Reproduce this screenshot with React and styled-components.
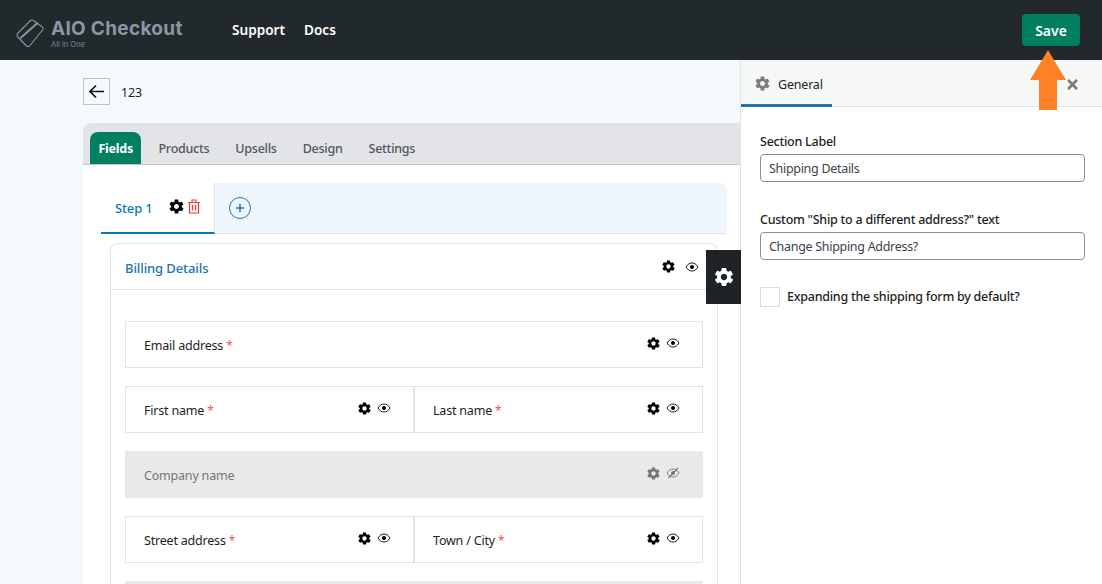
import React from "react";
import styled, { createGlobalStyle } from "styled-components";
import { IoMdSettings } from "react-icons/io";
import { FaTimes } from "react-icons/fa";

const Global = createGlobalStyle`
  html, body { margin: 0; padding: 0; height: 584px; overflow: hidden; }
  * { box-sizing: border-box; }
  body { font-family: "Noto Sans", "Open Sans", sans-serif; font-size: 12.5px; letter-spacing: -0.2px; color: #1e1e1e; }
`;
const Page = styled.div`
  position: relative; width: 1102px; height: 584px; overflow: hidden;
  display: flex; flex-direction: column; background: #f4f9fe;
`;
const Header = styled.header`
  height: 60px; flex: none; background: #22292d; display: flex; align-items: center;
  padding: 0 22px 0 16px;
`;
const Logo = styled.div`display: flex; align-items: center; gap: 6px; width: 216px;`;
const LogoMark = styled.svg`flex: none; margin-top: 7px;`;
const LogoText = styled.div`display: flex; flex-direction: column; color: #8b96a3; margin-top: 8px;`;
const LogoName = styled.span`
  font-family: "Inter", sans-serif; font-size: 19px; line-height: 22px; font-weight: 700; letter-spacing: 0.3px;
`;
const LogoSub = styled.span`font-family: "Inter", sans-serif; font-size: 7.5px; line-height: 10px; letter-spacing: 0; color: #7a8590;`;
const Nav = styled.nav`display: flex; gap: 19px; flex: 1;`;
const NavLink = styled.a`color: #fff; font-size: 13.6px; letter-spacing: 0; font-weight: 600; line-height: 20px;`;
const SaveButton = styled.button`
  width: 58px; height: 32px; border: 0; border-radius: 4px; background: #008060; color: #fff;
  font: 600 14px "Noto Sans", sans-serif; padding: 1px 0 0;
`;
const Body = styled.div`flex: 1; display: flex; min-height: 0;`;
const Main = styled.main`flex: none; width: 740px; padding: 18px 0 0 83px; overflow: hidden; display: flex; flex-direction: column;`;
const TitleRow = styled.div`display: flex; align-items: center; gap: 11px; height: 27px; margin-bottom: 18px;`;
const BackButton = styled.button`
  width: 27px; height: 27px; padding: 0; border: 1px solid #bcc2c8; background: transparent;
  display: flex; align-items: center; justify-content: center; color: #111;
`;
const Title = styled.span`color: #1e1e1e; padding-top: 2px;`;
const Card = styled.section`flex: 1; background: #fff; border-radius: 8px 0 0 0; display: flex; flex-direction: column; min-height: 0;`;
const TabBar = styled.div`
  height: 42px; flex: none; background: #e2e4e7; border-bottom: 1px solid #c4c6ca; border-radius: 8px 0 0 0;
  display: flex; align-items: flex-end; padding-left: 7px; letter-spacing: -0.25px;
`;
const Tab = styled.div`
  height: 32px; display: flex; align-items: center; padding: 2px ${p => p.$active ? "8.5px" : "13px"} 0;
  margin-right: ${p => p.$active ? "4px" : "0"};
  border-radius: 8px 8px 0 0; line-height: 18px;
  font-weight: ${p => p.$active ? 700 : 500};
  background: ${p => p.$active ? "#008060" : "transparent"};
  color: ${p => p.$active ? "#fff" : "#50575e"};
`;
const CardBody = styled.div`padding: 18px 13px 0 18px; flex: 1; min-height: 0;`;
const Steps = styled.div`
  height: 51px; display: flex; background: #eef5fd; border-bottom: 1px solid #e2e4e7; border-radius: 0 8px 0 0;
`;
const StepTab = styled.div`
  width: 114px; margin-bottom: -1px; background: #fff; border-right: 1px solid #e2e4e7; border-bottom: 2px solid #007cba;
  display: flex; align-items: center; padding-left: 14px; color: #007cba; font-size: 13px; letter-spacing: -0.15px; font-weight: 500;
`;
const StepIcons = styled.span`display: flex; align-items: center; gap: 2px; margin-left: 15px; margin-top: -3px;`;
const AddStep = styled.button`
  width: 22px; height: 22px; margin: 14px 0 0 14px; padding: 0; border: 1px solid #2271b1; border-radius: 50%;
  background: transparent; color: #2271b1; display: flex; align-items: center; justify-content: center;
`;
const Section = styled.div`
  margin: 9px 9px 0; border: 1px solid #e2e4e7; border-radius: 8px 8px 0 0; border-bottom: 0; height: 500px;
`;
const SectionHead = styled.div`
  height: 46px; border-bottom: 1px solid #e2e4e7; display: flex; align-items: center; justify-content: space-between;
  padding: 3px 18px 0 14px;
`;
const SectionTitle = styled.span`color: #2271b1; font-size: 13px; letter-spacing: -0.1px; font-weight: 500;`;
const HeadActions = styled.span`display: flex; align-items: center; gap: 9px; color: #000; margin-top: -3px;`;
const Fields = styled.div`padding: 31px 14px 0; display: flex; flex-direction: column; gap: 18px;`;
const Row = styled.div`display: flex;`;
const Field = styled.div`
  flex: 1 1 0; height: 47px; display: flex; align-items: center; justify-content: space-between;
  padding: 0 22px 0 18px;
  border: 1px solid ${p => p.$off ? "#e9e9e9" : "#e2e4e7"};
  background: ${p => p.$off ? "#e9e9e9" : "#fff"};
  color: ${p => p.$off ? "#757575" : "#1e1e1e"};
  & + & { border-left-width: 2px; margin-left: -1px; }
`;
const FieldName = styled.span`white-space: pre; margin-top: 2px;`;
const Req = styled.span`color: #ef5350; font-size: 12px;`;
const Actions = styled.span`
  display: flex; align-items: center; gap: 5px; color: ${p => p.$off ? "#757575" : "#000"};
  margin-top: -3px;
`;
const FloatGear = styled.div`
  position: absolute; left: 706px; top: 250px; width: 35px; height: 54px; background: #1e2327; color: #fff;
  display: flex; align-items: center; justify-content: center; padding-bottom: 1px;
`;
const Side = styled.aside`flex: 1; background: #fff; border-left: 1px solid #e2e4e7; display: flex; flex-direction: column;`;
const SideTabs = styled.div`
  height: 47px; background: #f6f7f7; border-bottom: 1px solid #e2e4e7; display: flex; justify-content: space-between;
  padding-right: 22px; flex: none; border-top: 1px solid #eef0f1;
`;
const SideTab = styled.div`
  width: 91px; height: 46px; border-bottom: 3px solid #2271b1; display: flex; align-items: center; gap: 7px; padding: 3px 0 0 13px; color: #1e1e1e;
  svg { color: #7d7d7d; margin-top: -2px; }
`;
const Close = styled.div`color: #7d7d7d; display: flex; align-items: center; padding-top: 2px;`;
const SideBody = styled.div`padding: 25px 17px 0 19px; display: flex; flex-direction: column; letter-spacing: -0.25px;`;
const Label = styled.label`line-height: 20px; font-weight: 500; color: #1e1e1e; margin-bottom: 2px;`;
const Input = styled.input`
  height: 28px; border: 1px solid #8c8f94; border-radius: 4px; padding: 0 8px; font: 12.5px "Noto Sans", sans-serif; letter-spacing: -0.3px; color: #3c434a;
  margin-bottom: 28px; background: #fff; width: 100%;
`;
const CheckRow = styled.div`display: flex; align-items: center; gap: 7px; margin-top: -1px;`;
const Check = styled.span`width: 20px; height: 20px; border: 1px solid #dcdcde; flex: none;`;
const CheckLabel = styled.span`font-weight: 500; margin-top: -2px;`;
const ArrowMark = styled.svg`position: absolute; left: 1030px; top: 50px;`;

const Eye = ({ off }) => (
  <svg width="14" height="12" viewBox="0 0 14 12" fill="none" stroke="currentColor" strokeWidth="0.9">
    <path d="M1 6 C3 2.800 5 2 7 2 C9 2 11 2.800 13 6 C11 9.200 9 10 7 10 C5 10 3 9.200 1 6Z" />
    <circle cx="7" cy="6" r="2" fill="currentColor" stroke="none" />
    {off && <path d="M2.500 11 L12 1" strokeWidth="1.1" />}
  </svg>
);
const Ctl = ({ off }) => (
  <Actions $off={off}>
    <IoMdSettings size={15} />
    <Eye off={off} />
  </Actions>
);

export default function App() {
  return (
    <Page>
      <Global />
      <Header>
        <Logo>
          <LogoMark width="29" height="29" viewBox="0 0 29 29" fill="none" stroke="#8b96a3" strokeWidth="1.1" strokeLinejoin="round">
            <path d="M1.500 14.500 L14.500 1.500 Q16 0.500 17.500 1.500 L26.500 8 Q27.500 9.500 26.500 11 L13.500 27 Q12 28 10.500 27 L1.500 17.500 Q0.800 16 1.500 14.500Z" />
            <path d="M4.500 19 L21.500 4" strokeWidth="2" />
          </LogoMark>
          <LogoText>
            <LogoName>AIO Checkout</LogoName>
            <LogoSub>All in One</LogoSub>
          </LogoText>
        </Logo>
        <Nav>
          <NavLink>Support</NavLink>
          <NavLink>Docs</NavLink>
        </Nav>
        <SaveButton>Save</SaveButton>
      </Header>
      <Body>
        <Main>
          <TitleRow>
            <BackButton>
              <svg width="17" height="15" viewBox="0 0 17 15" fill="none" stroke="currentColor" strokeWidth="1.7">
                <path d="M16 7.500H2M8 1.500L2 7.500L8 13.500" />
              </svg>
            </BackButton>
            <Title>123</Title>
          </TitleRow>
          <Card>
            <TabBar>
              <Tab $active>Fields</Tab>
              <Tab>Products</Tab>
              <Tab>Upsells</Tab>
              <Tab>Design</Tab>
              <Tab>Settings</Tab>
            </TabBar>
            <CardBody>
              <Steps>
                <StepTab>
                  Step 1
                  <StepIcons>
                    <IoMdSettings size={17} color="#000" />
                    <svg width="14" height="15" viewBox="0 0 14 15" fill="none" stroke="#f33" strokeWidth="1.2">
                      <path d="M1 3.500H13M5 3.500V1H9V3.500M2.500 3.500V14H11.500V3.500M5.500 6V11.500M8.500 6V11.500" />
                    </svg>
                  </StepIcons>
                </StepTab>
                <AddStep>
                  <svg width="10" height="10" viewBox="0 0 10 10" stroke="currentColor" strokeWidth="1.5"><path d="M5 1v8M1 5h8" /></svg>
                </AddStep>
              </Steps>
              <Section>
                <SectionHead>
                  <SectionTitle>Billing Details</SectionTitle>
                  <HeadActions><IoMdSettings size={15} /><Eye /></HeadActions>
                </SectionHead>
                <Fields>
                  <Row><Field><FieldName>Email address <Req>*</Req></FieldName><Ctl /></Field></Row>
                  <Row>
                    <Field><FieldName>First name <Req>*</Req></FieldName><Ctl /></Field>
                    <Field><FieldName>Last name <Req>*</Req></FieldName><Ctl /></Field>
                  </Row>
                  <Row><Field $off><FieldName>Company name</FieldName><Ctl off /></Field></Row>
                  <Row>
                    <Field><FieldName>Street address <Req>*</Req></FieldName><Ctl /></Field>
                    <Field><FieldName>Town / City <Req>*</Req></FieldName><Ctl /></Field>
                  </Row>
                  <Row><Field $off /></Row>
                </Fields>
              </Section>
            </CardBody>
          </Card>
        </Main>
        <Side>
          <SideTabs>
            <SideTab><IoMdSettings size={17} />General</SideTab>
            <Close><FaTimes size={15} /></Close>
          </SideTabs>
          <SideBody>
            <Label>Section Label</Label>
            <Input readOnly value="Shipping Details" />
            <Label>Custom "Ship to a different address?" text</Label>
            <Input readOnly value="Change Shipping Address?" />
            <CheckRow>
              <Check />
              <CheckLabel>Expanding the shipping form by default?</CheckLabel>
            </CheckRow>
          </SideBody>
        </Side>
      </Body>
      <FloatGear><IoMdSettings size={22} /></FloatGear>
      <ArrowMark width="36" height="60" viewBox="0 0 36 60">
        <path d="M18 0 L36 30 L27 30 L27 60 L9 60 L9 30 L0 30 Z" fill="#ff8126" />
      </ArrowMark>
    </Page>
  );
}
